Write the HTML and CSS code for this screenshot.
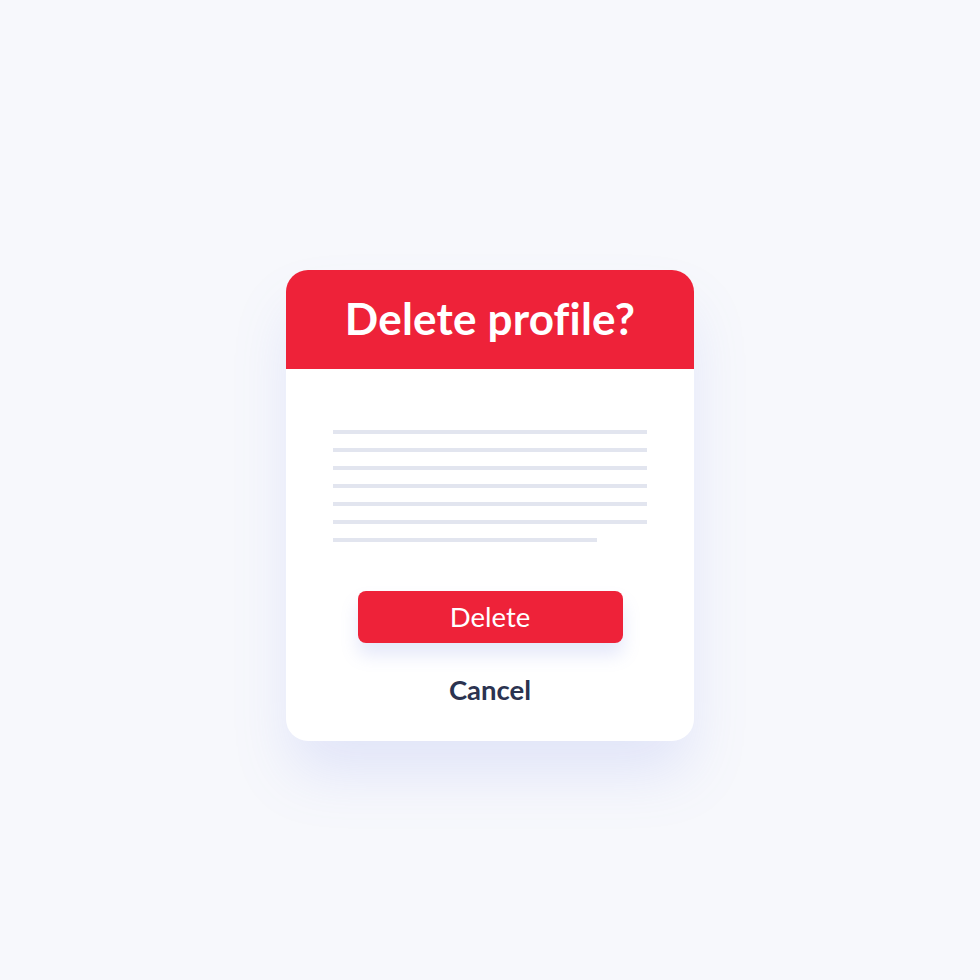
FILE: index.html
```html
<!DOCTYPE html>
<html lang="en">
<head>
  <meta charset="UTF-8" />
  <meta name="viewport" content="width=device-width, initial-scale=1.0" />
  <title>Delete profile?</title>
  <link rel="stylesheet" href="styles.css">
</head>
<body>
  <div class="page">
    <div class="dialog">
      <div class="dialog-header">
        <h1>Delete profile?</h1>
      </div>
      <div class="dialog-body">
        <div class="text-lines">
          <span class="line"></span>
          <span class="line"></span>
          <span class="line"></span>
          <span class="line"></span>
          <span class="line"></span>
          <span class="line"></span>
          <span class="line short"></span>
        </div>
        <button class="btn-delete">Delete</button>
        <button class="btn-cancel">Cancel</button>
      </div>
    </div>
  </div>
</body>
</html>
```
FILE: styles.css
```css
body {
  margin: 0;
  padding: 0;
  font-family: Lato, "Open Sans", sans-serif;
  background: #f7f8fc;
}

.page {
  display: flex;
  justify-content: center;
  padding-top: 270px;
  height: 710px;
}

.dialog {
  width: 408px;
  height: 471px;
  background: #fff;
  border-radius: 22px;
  overflow: hidden;
  box-shadow: 0 36px 60px -6px rgba(110, 130, 230, 0.17);
  display: flex;
  flex-direction: column;
}

.dialog-header {
  height: 99px;
  background: #ee2239;
  display: flex;
  align-items: center;
  justify-content: center;
}

.dialog-header h1 {
  margin: 0 0 4px;
  color: #fff;
  font-size: 44px;
  font-weight: 700;
  letter-spacing: 0.2px;
}

.dialog-body {
  display: flex;
  flex-direction: column;
  align-items: center;
  padding-top: 61px;
}

.text-lines {
  width: 314px;
  display: flex;
  flex-direction: column;
  gap: 14px;
}

.line {
  display: block;
  height: 4px;
  background: #e2e5ef;
}

.line.short {
  width: 264px;
}

.btn-delete {
  margin-top: 49px;
  width: 265px;
  height: 52px;
  border: none;
  border-radius: 8px;
  background: #ee2239;
  color: #fff;
  font-family: inherit;
  font-size: 27.5px;
  padding: 0 0 2px;
  box-shadow: 0 12px 18px rgba(110, 130, 230, 0.18);
  cursor: pointer;
}

.btn-cancel {
  margin-top: 30px;
  border: none;
  background: none;
  color: #2b3350;
  font-family: inherit;
  font-size: 27.5px;
  font-weight: 700;
  padding: 0;
  cursor: pointer;
}
```
